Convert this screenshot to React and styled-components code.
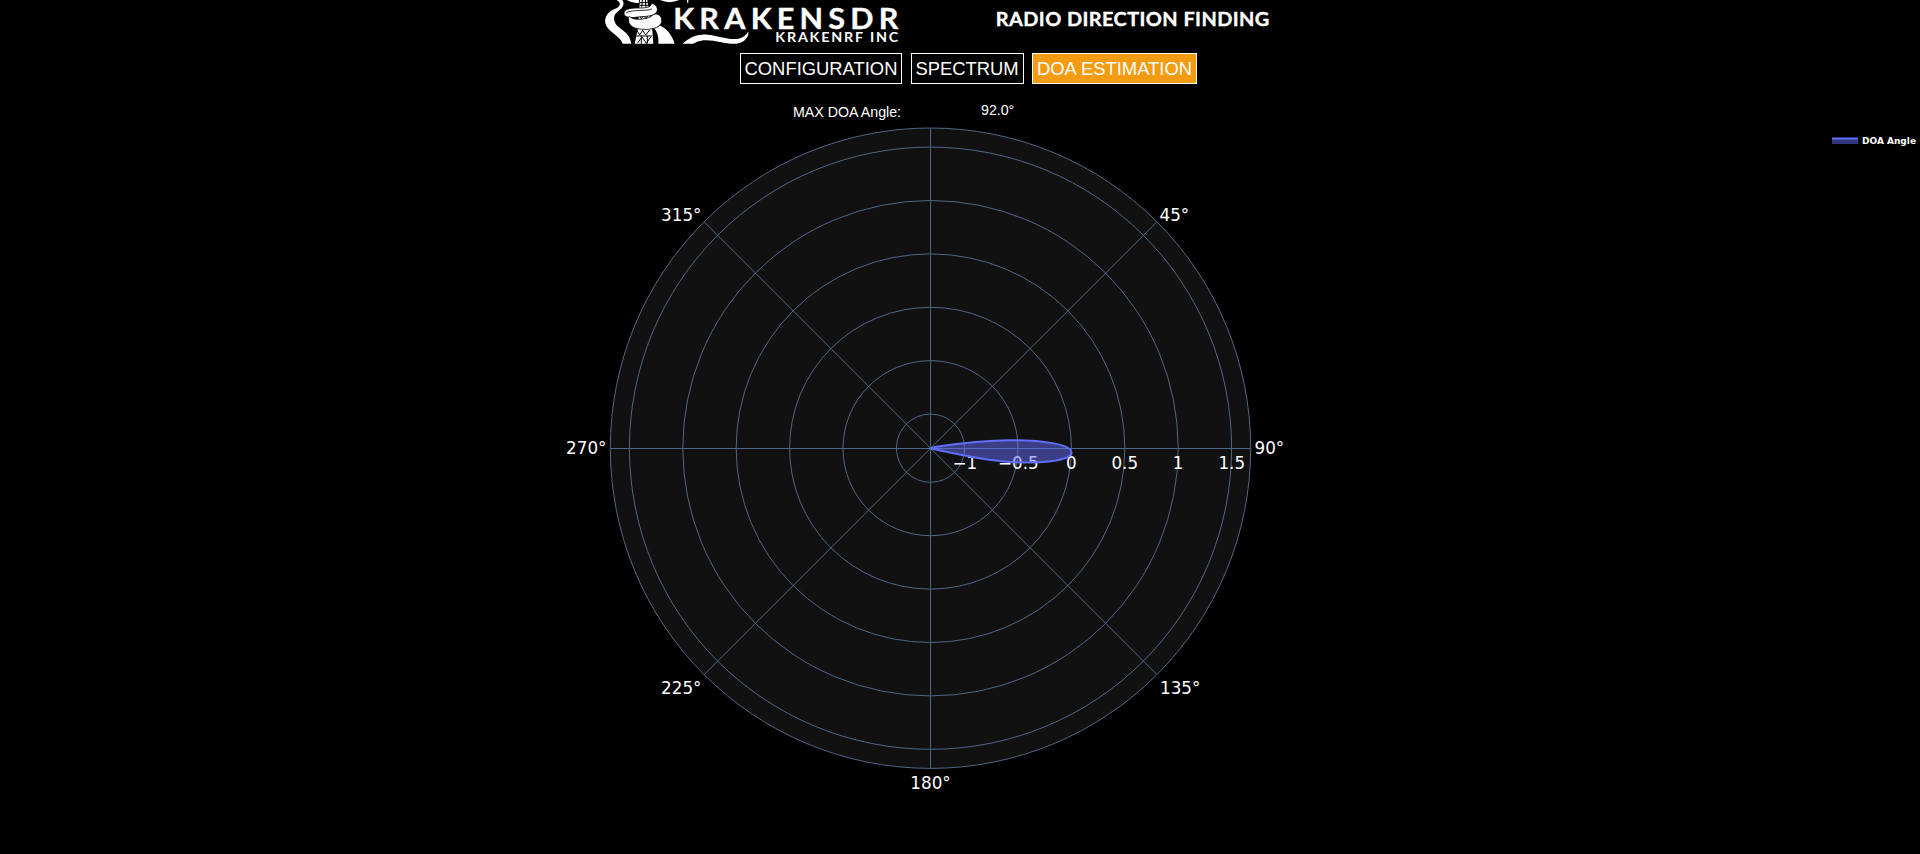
import React from "react";
import styled, { createGlobalStyle } from "styled-components";

const GlobalStyle = createGlobalStyle`
  body { margin: 0; background: #000; color: #fff; font-family: "Liberation Sans", Arial, sans-serif; overflow: hidden; }
`;

const Page = styled.main`
  display: flex;
  flex-direction: column;
  width: 1920px;
  height: 854px;
  background: #000;
`;

const Header = styled.header`
  display: flex;
  height: 44px;
  padding-left: 600px;
`;

const Banner = styled.svg`
  display: block;
  width: 680px;
  height: 44px;
  font-family: Lato, sans-serif;
  fill: #fff;
`;

const Nav = styled.nav`
  display: flex;
  gap: 8.5px;
  padding: 9px 0 0 740px;
`;

const Tab = styled.a`
  box-sizing: border-box;
  display: flex;
  justify-content: center;
  width: ${(p) => p.$width}px;
  height: 31px;
  border: 1px solid #fff;
  background: ${(p) => (p.$active ? "#f39c12" : "transparent")};
  color: #fff;
  font-size: 18.4px;
  line-height: 30px;
  white-space: nowrap;
`;

const Readout = styled.div`
  display: flex;
  height: 40px;
  padding-left: 793px;
  font-size: 14.2px;
  line-height: 16px;
`;

const Label = styled.span`
  width: 188px;
  padding-top: 20px;
`;

const Value = styled.span`
  padding-top: 18px;
`;

const Plot = styled.svg`
  display: block;
  width: 1920px;
  height: 730px;
  font-family: Verdana, "DejaVu Sans", sans-serif;
  font-size: 16.8px;
  fill: #fff;
`;

const Grid = styled.g`
  fill: none;
  stroke: #506784;
  stroke-width: 1;
`;

const LegendText = styled.text`
  font-size: 9.2px;
  font-weight: 700;
`;

const CX = 930.5;
const CY = 448.2;
const R = 320.2;
const D = R * Math.SQRT1_2;

const rings = [34.1, 87.5, 140.9, 194.3, 247.7, 301.1];

const radialTicks = [
  ["−1", 964.8],
  ["−0.5", 1018.4],
  ["0", 1071.4],
  ["0.5", 1124.8],
  ["1", 1178.2],
  ["1.5", 1231.8],
];

const angularTicks = [
  ["45°", 1159.5, 221, "start"],
  ["90°", 1254.5, 454, "start"],
  ["135°", 1160, 694, "start"],
  ["180°", 930.5, 788.5, "middle"],
  ["225°", 701.5, 694, "end"],
  ["270°", 606.5, 454, "end"],
  ["315°", 701.5, 221, "end"],
];

function Tentacles() {
  return (
    <g transform="translate(-10 0) scale(.33333)">
      <path d="M80 0H97C104 10 101 21 88 31C70 44 67 58 80 76C97 93 119 99 124 131H98C90 109 62 99 49 78C39 55 51 37 74 27C91 21 96 9 80 0Z" />
      <path d="M110 0H147V8Q128 11 110 0ZM210 0H268Q238 13 210 0ZM291 0H295V8H291Z" />
      <path d="M192 83L211 77C234 88 247 108 254 131H205C207 111 201 94 192 83Z" />
      <path d="M278 131C299 112 323 102 351 104C386 106 414 121 445 116C462 112 467 104 475 95C477 109 466 125 446 130C414 137 375 117 340 121Q322 123 309 131Z" />
      <path d="M150 0H172L180 50L187 90L190 131H134L143 90Z" />
      <g fill="none" stroke="#000" strokeWidth="3">
        <path d="M157 0L155 22M166 0L168 22M150 8H174M149 16H176" />
        <path d="M148 45L154 56L161 46L168 56L175 45" />
        <path d="M141 91L149 105L158 91L167 105L179 90M139 108H187M143 129L156 111L169 130L182 111M154 107V131M172 107V131" />
      </g>
      <g stroke="#000" strokeWidth="2.5">
        <path d="M102 38C104 25 127 24 148 24C171 24 185 21 184 9C199 13 207 26 199 38C187 52 158 48 137 52C117 55 100 50 102 38Z" />
        <path d="M115 54C116 48 121 49 123 53C141 61 166 58 181 51C187 47 189 42 199 42C213 44 218 57 214 69C207 84 184 89 160 88C134 87 114 80 115 54Z" />
        <path d="M109 38C128 28 169 34 186 27" fill="none" />
      </g>
    </g>
  );
}

export default function App() {
  return (
    <Page>
      <GlobalStyle />
      <Header>
        <Banner viewBox="0 0 680 44">
          <Tentacles />
          <text transform="translate(73.2 28.6) scale(1.08 1)" fontSize="28.3" fontWeight="700" textLength="208.5" stroke="#fff" strokeWidth=".35">KRAKENSDR</text>
          <text transform="translate(175.3 41.5) scale(1.1 1)" fontSize="13" fontWeight="700" textLength="111.8">KRAKENRF INC</text>
          <text transform="translate(395.8 25.6) scale(1.06 1)" fontSize="18.8" fontWeight="700" textLength="258" stroke="#fff" strokeWidth=".35">RADIO DIRECTION FINDING</text>
        </Banner>
      </Header>
      <Nav>
        <Tab $width={162}>CONFIGURATION</Tab>
        <Tab $width={113}>SPECTRUM</Tab>
        <Tab $width={165} $active>DOA ESTIMATION</Tab>
      </Nav>
      <Readout>
        <Label>MAX DOA Angle:</Label>
        <Value>92.0°</Value>
      </Readout>
      <Plot viewBox="0 124 1920 730">
        <circle cx={CX} cy={CY} r={R} fill="#111" />
        <Grid>
          {rings.map((r) => (
            <circle key={r} cx={CX} cy={CY} r={r} />
          ))}
          <path d={`M${CX - R} 448.5h${2 * R}M${CX} ${CY - R}v${2 * R}M${CX - D} ${CY - D}l${2 * D} ${2 * D}M${CX - D} ${CY + D}l${2 * D} ${-2 * D}`} />
          <circle cx={CX} cy={CY} r={R} />
        </Grid>
        {radialTicks.map(([label, x]) => (
          <text key={label} x={x} y="468.8" textAnchor="middle">{label}</text>
        ))}
        {angularTicks.map(([label, x, y, anchor]) => (
          <text key={label} x={x} y={y} textAnchor={anchor}>{label}</text>
        ))}
        <path
          d="M930.5 448.5L936 446.8C959 443.3 983 440.3 1010 440.2C1041 440.1 1071.5 444 1071.5 452.5C1071.5 459.5 1050 462.7 1024 462.6C991 462.2 959 454.5 930.5 448.5Z"
          fill="#636efa"
          fillOpacity=".5"
          stroke="#636efa"
          strokeWidth="2"
          strokeLinejoin="round"
        />
        <rect x="1832" y="138" width="26" height="6" fill="#636efa" fillOpacity=".5" />
        <path d="M1832 138.5h26" stroke="#636efa" strokeWidth="2" />
        <LegendText x="1862" y="143.8" textLength="54" lengthAdjust="spacingAndGlyphs">DOA Angle</LegendText>
      </Plot>
    </Page>
  );
}
